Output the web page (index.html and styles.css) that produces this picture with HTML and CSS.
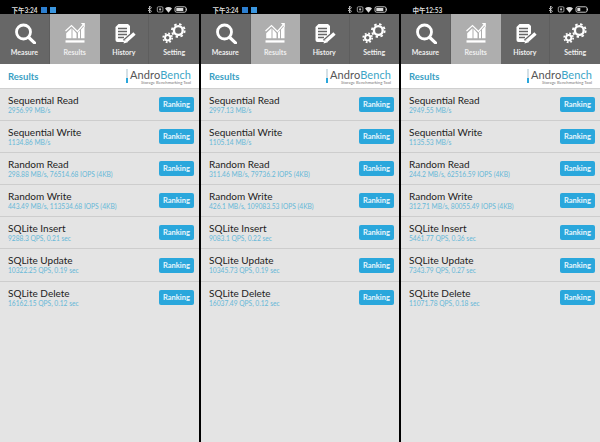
FILE: index.html
```html
<!DOCTYPE html>
<html lang="en">
<head>
<meta charset="utf-8">
<title>AndroBench Results</title>
<link rel="stylesheet" href="styles.css">
</head>
<body>
<svg class="sprite" width="0" height="0" aria-hidden="true">
  <symbol id="i-measure" viewBox="0 0 24 21">
    <circle cx="11.500" cy="9" r="7" fill="none" stroke="#fff" stroke-width="2.800"/>
    <path d="M16.800 14.500 22.500 19.800" stroke="#fff" stroke-width="3.200" stroke-linecap="round"/>
  </symbol>
  <symbol id="i-results" viewBox="0 0 24 21">
    <path d="M3.200 10.300 8.500 5.300v10H3.200zM9.500 5.700l4 4.600v5h-4zM15 9.500l2-2v7.800h-2zM18 6.500l3.500-4v12.800H18z" fill="#fff"/>
    <path d="M2.500 8 8.500 2.500l6 6L20 2" fill="none" stroke="#fff" stroke-width="1.200"/>
    <path d="M17.800 0h4v4.200z" fill="#fff"/>
    <path d="M2.500 17.300h19v2.300h-19z" fill="#fff"/>
  </symbol>
  <symbol id="i-history" viewBox="0 0 24 21">
    <path d="M6.500 1h9.500l2 2v14a2 2 0 0 1-2 2H5.500a2 2 0 0 1-2-2V4z" fill="#fff"/>
    <path d="M6 5.500h9M6 8.500h9M6 11.500h9M6 14.500h6" stroke="#666" stroke-width="1.300"/>
    <path d="M22.500 10.500 13 19" stroke="#666" stroke-width="6"/>
    <path d="M22.500 10.500 14 18" stroke="#fff" stroke-width="3.400"/>
    <path d="M15.800 19.200 11.500 20.600l1.200-4.200z" fill="#fff"/>
  </symbol>
  <symbol id="i-setting" viewBox="0 0 24 21">
    <circle cx="16.300" cy="7.500" r="4.400" fill="none" stroke="#fff" stroke-width="2.400"/>
    <circle cx="16.300" cy="7.500" r="6.400" fill="none" stroke="#fff" stroke-width="1.800" stroke-dasharray="2.500 2.530"/>
    <circle cx="5.700" cy="14.800" r="2.700" fill="none" stroke="#fff" stroke-width="2"/>
    <circle cx="5.700" cy="14.800" r="4.500" fill="none" stroke="#fff" stroke-width="1.700" stroke-dasharray="1.770 1.765"/>
  </symbol>
  <symbol id="i-status" viewBox="0 0 39 7">
    <path d="M1.500 0v7l2-1.700L0 2M1.500 0l2 1.700L0 5" fill="none" stroke="#ddd" stroke-width=".8"/>
    <rect x="9.300" y=".8" width="5.600" height="5.200" rx="1" fill="none" stroke="#bbb" stroke-width=".8"/>
    <circle cx="12.100" cy="3.400" r="1.100" fill="#bbb"/>
    <path d="M17 2.500a5 5 0 0 1 7 0L20.500 6.800z" fill="#ddd"/>
    <rect x="27" y=".8" width="11" height="5.400" rx="1.500" fill="none" stroke="#ddd" stroke-width=".9"/>
    <rect x="38.200" y="2.500" width=".8" height="2" fill="#ddd"/>
    <rect x="28.300" y="2" width="7" height="3" fill="#ddd"/>
  </symbol>
  <symbol id="i-status-low" viewBox="0 0 39 7">
    <path d="M1.500 0v7l2-1.700L0 2M1.500 0l2 1.700L0 5" fill="none" stroke="#ddd" stroke-width=".8"/>
    <rect x="9.300" y=".8" width="5.600" height="5.200" rx="1" fill="none" stroke="#bbb" stroke-width=".8"/>
    <circle cx="12.100" cy="3.400" r="1.100" fill="#bbb"/>
    <path d="M17 2.500a5 5 0 0 1 7 0L20.500 6.800z" fill="#ddd"/>
    <rect x="27" y=".8" width="11" height="5.400" rx="1.500" fill="none" stroke="#ddd" stroke-width=".9"/>
    <rect x="38.200" y="2.500" width=".8" height="2" fill="#ddd"/>
    <rect x="28.300" y="2" width="3" height="3" fill="#ddd"/>
  </symbol>
</svg>

<main class="screens">

<section class="phone">
  <div class="status"><span class="clock">下午3:24</span><i class="app app-a"></i><i class="app app-b"></i><svg class="status-icons"><use href="#i-status"/></svg></div>
  <nav class="tabs">
    <a class="tab"><svg class="icon"><use href="#i-measure"/></svg><span>Measure</span></a>
    <a class="tab active"><svg class="icon"><use href="#i-results"/></svg><span>Results</span></a>
    <a class="tab"><svg class="icon"><use href="#i-history"/></svg><span>History</span></a>
    <a class="tab"><svg class="icon"><use href="#i-setting"/></svg><span>Setting</span></a>
  </nav>
  <header class="head"><h1>Results</h1><div class="logo"><i class="logo-bar"></i><div><div class="logo-name">Andro<b>Bench</b></div><div class="logo-sub">Storage Benchmarking Tool</div></div></div></header>
  <ul class="rows">
    <li class="row"><div class="info"><h2>Sequential Read</h2><p>2956.99 MB/s</p></div><button>Ranking</button></li>
    <li class="row"><div class="info"><h2>Sequential Write</h2><p>1134.86 MB/s</p></div><button>Ranking</button></li>
    <li class="row"><div class="info"><h2>Random Read</h2><p>298.88 MB/s, 76514.68 IOPS (4KB)</p></div><button>Ranking</button></li>
    <li class="row"><div class="info"><h2>Random Write</h2><p>443.49 MB/s, 113534.68 IOPS (4KB)</p></div><button>Ranking</button></li>
    <li class="row"><div class="info"><h2>SQLite Insert</h2><p>9288.3 QPS, 0.21 sec</p></div><button>Ranking</button></li>
    <li class="row"><div class="info"><h2>SQLite Update</h2><p>10322.25 QPS, 0.19 sec</p></div><button>Ranking</button></li>
    <li class="row"><div class="info"><h2>SQLite Delete</h2><p>16162.15 QPS, 0.12 sec</p></div><button>Ranking</button></li>
  </ul>
</section>

<section class="phone">
  <div class="status"><span class="clock">下午3:24</span><i class="app app-a"></i><i class="app app-b"></i><svg class="status-icons"><use href="#i-status"/></svg></div>
  <nav class="tabs">
    <a class="tab"><svg class="icon"><use href="#i-measure"/></svg><span>Measure</span></a>
    <a class="tab active"><svg class="icon"><use href="#i-results"/></svg><span>Results</span></a>
    <a class="tab"><svg class="icon"><use href="#i-history"/></svg><span>History</span></a>
    <a class="tab"><svg class="icon"><use href="#i-setting"/></svg><span>Setting</span></a>
  </nav>
  <header class="head"><h1>Results</h1><div class="logo"><i class="logo-bar"></i><div><div class="logo-name">Andro<b>Bench</b></div><div class="logo-sub">Storage Benchmarking Tool</div></div></div></header>
  <ul class="rows">
    <li class="row"><div class="info"><h2>Sequential Read</h2><p>2997.13 MB/s</p></div><button>Ranking</button></li>
    <li class="row"><div class="info"><h2>Sequential Write</h2><p>1105.14 MB/s</p></div><button>Ranking</button></li>
    <li class="row"><div class="info"><h2>Random Read</h2><p>311.46 MB/s, 79736.2 IOPS (4KB)</p></div><button>Ranking</button></li>
    <li class="row"><div class="info"><h2>Random Write</h2><p>426.1 MB/s, 109083.53 IOPS (4KB)</p></div><button>Ranking</button></li>
    <li class="row"><div class="info"><h2>SQLite Insert</h2><p>9083.1 QPS, 0.22 sec</p></div><button>Ranking</button></li>
    <li class="row"><div class="info"><h2>SQLite Update</h2><p>10345.73 QPS, 0.19 sec</p></div><button>Ranking</button></li>
    <li class="row"><div class="info"><h2>SQLite Delete</h2><p>16037.49 QPS, 0.12 sec</p></div><button>Ranking</button></li>
  </ul>
</section>

<section class="phone">
  <div class="status"><span class="clock">中午12:53</span><svg class="status-icons"><use href="#i-status-low"/></svg></div>
  <nav class="tabs">
    <a class="tab"><svg class="icon"><use href="#i-measure"/></svg><span>Measure</span></a>
    <a class="tab active"><svg class="icon"><use href="#i-results"/></svg><span>Results</span></a>
    <a class="tab"><svg class="icon"><use href="#i-history"/></svg><span>History</span></a>
    <a class="tab"><svg class="icon"><use href="#i-setting"/></svg><span>Setting</span></a>
  </nav>
  <header class="head"><h1>Results</h1><div class="logo"><i class="logo-bar"></i><div><div class="logo-name">Andro<b>Bench</b></div><div class="logo-sub">Storage Benchmarking Tool</div></div></div></header>
  <ul class="rows">
    <li class="row"><div class="info"><h2>Sequential Read</h2><p>2949.55 MB/s</p></div><button>Ranking</button></li>
    <li class="row"><div class="info"><h2>Sequential Write</h2><p>1135.53 MB/s</p></div><button>Ranking</button></li>
    <li class="row"><div class="info"><h2>Random Read</h2><p>244.2 MB/s, 62516.59 IOPS (4KB)</p></div><button>Ranking</button></li>
    <li class="row"><div class="info"><h2>Random Write</h2><p>312.71 MB/s, 80055.49 IOPS (4KB)</p></div><button>Ranking</button></li>
    <li class="row"><div class="info"><h2>SQLite Insert</h2><p>5461.77 QPS, 0.36 sec</p></div><button>Ranking</button></li>
    <li class="row"><div class="info"><h2>SQLite Update</h2><p>7343.79 QPS, 0.27 sec</p></div><button>Ranking</button></li>
    <li class="row"><div class="info"><h2>SQLite Delete</h2><p>11071.78 QPS, 0.18 sec</p></div><button>Ranking</button></li>
  </ul>
</section>

</main>
</body>
</html>
```

FILE: styles.css
```css
* { box-sizing: border-box; margin: 0; padding: 0; }
html, body { width: 600px; height: 442px; overflow: hidden; background: #000; }
body { font-family: Lato, "Noto Sans CJK SC", sans-serif; }
.sprite { display: block; height: 0; }
.screens { display: grid; grid-template-columns: 199px 198px 199px; column-gap: 2px; height: 442px; background: #000; }
.phone { display: flex; flex-direction: column; height: 442px; background: #e4e4e4; }

.status { display: flex; align-items: center; height: 14px; padding: 5px 12px 0 11.500px; background: #000; color: #ddd; font-size: 6.500px; font-weight: 700; }
.clock { margin-right: 4px; }
.app { width: 6px; height: 6px; margin-right: 3px; background: #2d7fd0; }
.app-b { background: #3b96df; }
.status-icons { width: 39px; height: 7px; margin-left: auto; }

.tabs { display: grid; grid-template-columns: repeat(4, 1fr); height: 50px; background: #676767; }
.tab { display: flex; flex-direction: column; align-items: center; padding-top: 9px; color: #eee; font-size: 7px; font-weight: 700; line-height: 9px; border-right: 1px solid #5e5e5e; }
.tab:last-child { border-right: 0; }
.tab.active { background: #aeaeae; border-right: 0; }
.icon { width: 24px; height: 21px; margin-bottom: 4px; }

.head { display: flex; justify-content: space-between; align-items: center; height: 25px; padding: 1px 8px 0; background: #fff; border-bottom: 1px solid #cfcfcf; }
h1 { font-size: 9.500px; font-weight: 700; color: #3a9fc4; }
.logo { display: flex; gap: 2px; align-items: flex-start; }
.logo-bar { width: 2px; height: 14px; background: linear-gradient(#d5e0e6 64%, #2aa7dc 64%); }
.logo-name { font-size: 11px; line-height: 11px; letter-spacing: .1px; color: #555; }
.logo-name b { font-weight: 400; color: #3ba5c6; }
.logo-sub { font-size: 4.200px; line-height: 5px; text-align: right; color: #777; }

.rows { list-style: none; }
.row { display: flex; justify-content: space-between; align-items: center; height: 32.100px; padding: 0 5px 0 8px; border-bottom: 1.500px solid #cdcdcd; }
.row:last-child { border-bottom: 0; }
.info { padding-bottom: 1px; }
h2 { font-size: 10px; line-height: 12px; font-weight: 400; color: #222; }
.row p { font-size: 6.650px; line-height: 9px; color: #66b8d8; }
button { width: 35px; height: 15px; border: 0; border-radius: 2px; background: #2aa7dc; color: #e8f6fc; font-family: inherit; font-size: 7.500px; font-weight: 700; }
```
